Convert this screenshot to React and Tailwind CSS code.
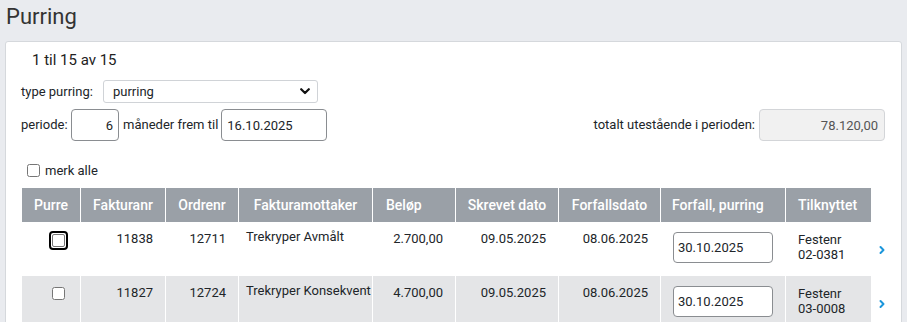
import { ChevronRight } from 'lucide-react';

const rows = [
  { faktura: '11838', ordre: '12711', mottaker: 'Trekryper Avmålt', belop: '2.700,00', skrevet: '09.05.2025', forfall: '08.06.2025', purring: '30.10.2025', fest: '02-0381', focused: true },
  { faktura: '11827', ordre: '12724', mottaker: 'Trekryper Konsekvent', belop: '4.700,00', skrevet: '09.05.2025', forfall: '08.06.2025', purring: '30.10.2025', fest: '03-0008' },
];

export default function App() {
  return (
    <div className="min-h-[322px] bg-[#e9ebef] font-['Roboto',sans-serif] text-[#212529] overflow-hidden">
      <div className="h-[41px] pl-[6px] pt-[2px] text-[22px] leading-[30px] text-[#333]">Purring</div>

      <div className="mx-[5px] bg-white border border-[#d5d8dc] rounded-[3px] pl-[15px] pt-[8px] pb-4">
        <div className="pl-[11px] text-[15px] leading-5 text-[#222]">1 til 15 av 15</div>

        {/* filter */}
        <div className="mt-[10px] flex items-center h-[23px] text-[13px]">
          <span className="w-[82px]">type purring:</span>
          <div className="relative w-[215px] h-[23px]">
            <select className="w-full h-full border border-[#d0d3d7] rounded-[3px] pl-[9px] text-[13px] appearance-none bg-white" defaultValue="purring">
              <option>purring</option>
            </select>
            <svg className="absolute right-[8px] top-[8px] w-[10px] h-[7px] pointer-events-none" viewBox="0 0 10 7">
              <path d="M1.2 1.2 5 5 8.8 1.2" fill="none" stroke="#111" strokeWidth="2.2" strokeLinecap="round" strokeLinejoin="round" />
            </svg>
          </div>
        </div>

        <div className="mt-[6px] flex items-center h-[32px] text-[13px] pr-[16px]">
          <span className="w-[50px]">periode:</span>
          <input className="w-[48px] h-[32px] border border-[#8a8d91] rounded-[4px] text-right pr-[5px] text-[13px]" defaultValue="6" />
          <span className="ml-[4px] mr-[3px]">måneder frem til</span>
          <input className="w-[106px] h-[32px] border border-[#8a8d91] rounded-[4px] pl-[5px] text-[13px]" defaultValue="16.10.2025" />
          <span className="ml-auto mr-[4px]">totalt utestående i perioden:</span>
          <input readOnly className="w-[126px] h-[32px] border border-[#d3d5d8] bg-[#f1f1f1] rounded-[4px] text-right pr-[6px] text-[13px] text-[#555]" defaultValue="78.120,00" />
        </div>

        <label className="mt-[20px] mb-[8px] pl-[6px] flex items-center h-[19px] text-[13px]">
          <input type="checkbox" className="w-[13px] h-[13px] m-0" />
          <span className="ml-[5px]">merk alle</span>
        </label>

        <table className="ml-[1px] table-fixed border-separate border-spacing-0 w-[873px] text-[13px]">
          <colgroup>
            <col className="w-[58px]" />
            <col className="w-[85px]" />
            <col className="w-[73px]" />
            <col className="w-[134px]" />
            <col className="w-[83px]" />
            <col className="w-[103px]" />
            <col className="w-[102px]" />
            <col className="w-[125px]" />
            <col className="w-[86px]" />
            <col className="w-[24px]" />
          </colgroup>
          <thead>
            <tr className="h-[34px] text-white text-[14px] font-medium">
              <th className="bg-[#9aa0a7] font-medium text-center">Purre</th>
              <th className="bg-[#9aa0a7] font-medium text-center border-l border-white">Fakturanr</th>
              <th className="bg-[#9aa0a7] font-medium text-center border-l border-white">Ordrenr</th>
              <th className="bg-[#9aa0a7] font-medium text-center border-l border-white">Fakturamottaker</th>
              <th className="bg-[#9aa0a7] font-medium text-left pl-[13px] border-l border-white">Beløp</th>
              <th className="bg-[#9aa0a7] font-medium text-center border-l border-white">Skrevet dato</th>
              <th className="bg-[#9aa0a7] font-medium text-center border-l border-white">Forfallsdato</th>
              <th className="bg-[#9aa0a7] font-medium text-left pl-[11px] border-l border-white">Forfall, purring</th>
              <th className="bg-[#9aa0a7] font-medium text-left pl-[12px] border-l border-white">Tilknyttet</th>
              <th></th>
            </tr>
          </thead>
          <tbody>
            {rows.map((r, i) => {
              const bg = i % 2 === 1 ? 'bg-[#e4e5e7]' : 'bg-white';
              return (
                <tr key={r.faktura} className="h-[54px] align-top leading-4">
                  <td className={`${bg} pt-[9px] pl-[30px]`}>
                    {r.focused ? (
                      <div className="-ml-[3px] w-[19px] h-[19px] rounded-[4px] border-2 border-black flex items-center justify-center">
                        <div className="w-[13px] h-[13px] rounded-[2px] border border-[#767676] bg-white" />
                      </div>
                    ) : (
                      <input type="checkbox" className="block w-[13px] h-[13px] m-0 mt-[2px]" />
                    )}
                  </td>
                  <td className={`${bg} border-l border-white pt-[9px] text-right pr-[12px]`}>{r.faktura}</td>
                  <td className={`${bg} border-l border-white pt-[9px] text-right pr-[12px]`}>{r.ordre}</td>
                  <td className={`${bg} border-l border-white pt-[7px] pl-[7px] whitespace-nowrap`}>{r.mottaker}</td>
                  <td className={`${bg} border-l border-white pt-[9px] text-right pr-[12px]`}>{r.belop}</td>
                  <td className={`${bg} border-l border-white pt-[9px] text-right pr-[12px]`}>{r.skrevet}</td>
                  <td className={`${bg} border-l border-white pt-[9px] text-right pr-[12px]`}>{r.forfall}</td>
                  <td className={`${bg} border-l border-white pt-[10px] pl-[12px]`}>
                    <input className="w-[100px] h-[31px] border border-[#8a8d91] rounded-[4px] pl-[4px] text-[13px] bg-white" defaultValue={r.purring} />
                  </td>
                  <td className={`${bg} border-l border-white pt-[10px] pl-[12px] leading-[15px]`}>
                    Festenr<br />{r.fest}
                  </td>
                  <td className="align-middle pl-[5px] pt-[2px]">
                    <ChevronRight size={12} strokeWidth={4} className="text-[#1b96db]" />
                  </td>
                </tr>
              );
            })}
          </tbody>
        </table>
      </div>
    </div>
  );
}
